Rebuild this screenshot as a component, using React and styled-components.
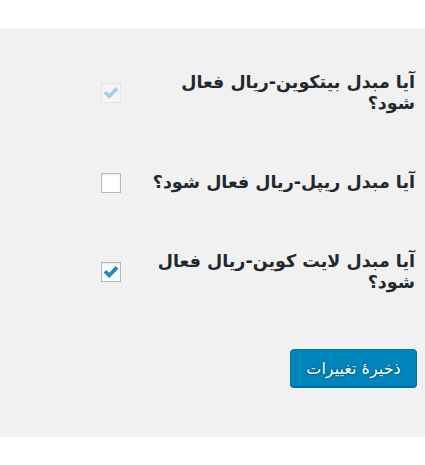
import React from "react";
import styled, { createGlobalStyle } from "styled-components";

const Global = createGlobalStyle`
  html, body { margin: 0; padding: 0; background: #fff; }
  body { font-family: "DejaVu Sans", Tahoma, sans-serif; }
`;

const Panel = styled.form`
  margin-top: 28px;
  height: 409px;
  box-sizing: border-box;
  background: #f1f1f1;
  direction: rtl;
  padding: 24px 10px 0 8px;
  display: flex;
  flex-direction: column;
  gap: 18px;
`;

const Row = styled.div`
  display: flex;
  align-items: center;
`;

const Label = styled.label`
  width: 284px;
  box-sizing: border-box;
  padding: 20px 0 20px 6px;
  font-size: 17.5px;
  font-weight: 700;
  line-height: 21px;
  color: #23282d;
  text-align: right;
  white-space: nowrap;
`;

const Field = styled.div`
  padding: 0 10px;
  display: flex;
  align-items: center;
`;

const Box = styled.span`
  width: 20px;
  height: 20px;
  box-sizing: border-box;
  border: 1px solid ${(p) => (p.$disabled ? "#e2e4e6" : "#b4b9be")};
  background: ${(p) => (p.$disabled ? "#f6f6f6" : "#fff")};
  box-shadow: inset 0 1px 2px rgba(0, 0, 0, ${(p) => (p.$disabled ? 0.03 : 0.1)});
  display: flex;
  align-items: center;
  justify-content: center;
  color: ${(p) => (p.$disabled ? "#a6d1e5" : "#1e8cbe")};
`;

const Actions = styled.div`
  display: flex;
  margin-top: 18px;
`;

const Button = styled.button`
  height: 38px;
  width: 127px;
  margin-right: -2px;
  box-sizing: border-box;
  background: #0085ba;
  border: 1px solid #0073aa;
  border-radius: 4px;
  box-shadow: 0 1px 0 #006799;
  color: #fff;
  text-shadow: 0 -1px 1px #006799, 1px 0 1px #006799, 0 1px 1px #006799, -1px 0 1px #006799;
  font-family: "DejaVu Sans", Tahoma, sans-serif;
  font-size: 16px;
  direction: rtl;
  cursor: pointer;
  padding: 0 8px;
`;

const Check = () => (
  <svg width="18" height="18" viewBox="0 0 18 18">
    <path d="M1.6 9.6 L4.3 6.9 L7.2 9.7 L13.7 3 L16.5 5.8 L7.2 15.1 Z" fill="currentColor" />
  </svg>
);

const Checkbox = ({ checked, disabled }) => (
  <Box $disabled={disabled} role="checkbox" aria-checked={checked} aria-disabled={disabled}>
    {checked && <Check />}
  </Box>
);

const settings = [
  { lines: ["آیا مبدل بیتکوین-ریال فعال", "شود؟"], checked: true, disabled: true },
  { lines: ["آیا مبدل ریپل-ریال فعال شود؟"], checked: false },
  { lines: ["آیا مبدل لایت کوین-ریال فعال", "شود؟"], checked: true },
];

export default function App() {
  return (
    <>
      <Global />
      <Panel onSubmit={(e) => e.preventDefault()}>
        {settings.map((s, i) => (
          <Row key={i}>
            <Label>
              {s.lines.map((l, j) => (
                <React.Fragment key={j}>
                  {j > 0 && <br />}
                  {l}
                </React.Fragment>
              ))}
            </Label>
            <Field>
              <Checkbox checked={s.checked} disabled={s.disabled} />
            </Field>
          </Row>
        ))}
        <Actions>
          <Button type="submit">ذخیرهٔ تغییرات</Button>
        </Actions>
      </Panel>
    </>
  );
}
